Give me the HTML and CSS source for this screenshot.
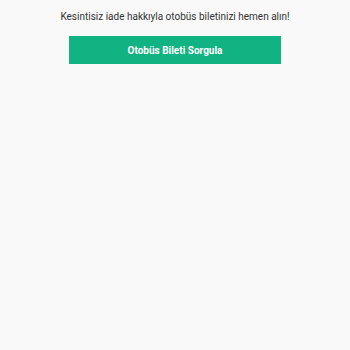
FILE: index.html
```html
<!DOCTYPE html>
<html>
<head>
<meta charset="utf-8">
<link rel="stylesheet" href="styles.css">
</head>
<body>
<div class="wrap">
  <p class="msg">Kesintisiz iade hakkıyla otobüs biletinizi hemen alın!</p>
  <button class="btn">Otobüs Bileti Sorgula</button>
</div>
</body>
</html>
```
FILE: styles.css
```css
html, body { margin: 0; padding: 0; }
body {
  background: #f9f9f9;
  font-family: Roboto, "Noto Sans", sans-serif;
  width: 350px;
  height: 350px;
}
.wrap {
  display: flex;
  flex-direction: column;
  align-items: center;
  padding-top: 9px;
}
.msg {
  margin: 0;
  font-size: 10px;
  line-height: 14px;
  color: #333;
  padding-top: 1px;
}
.btn {
  margin-top: 12px;
  width: 212px;
  height: 28px;
  border: 0;
  background: #12b382;
  color: #fff;
  font-family: Roboto, sans-serif;
  font-weight: 700;
  font-size: 10px;
  padding: 0;
}
```
